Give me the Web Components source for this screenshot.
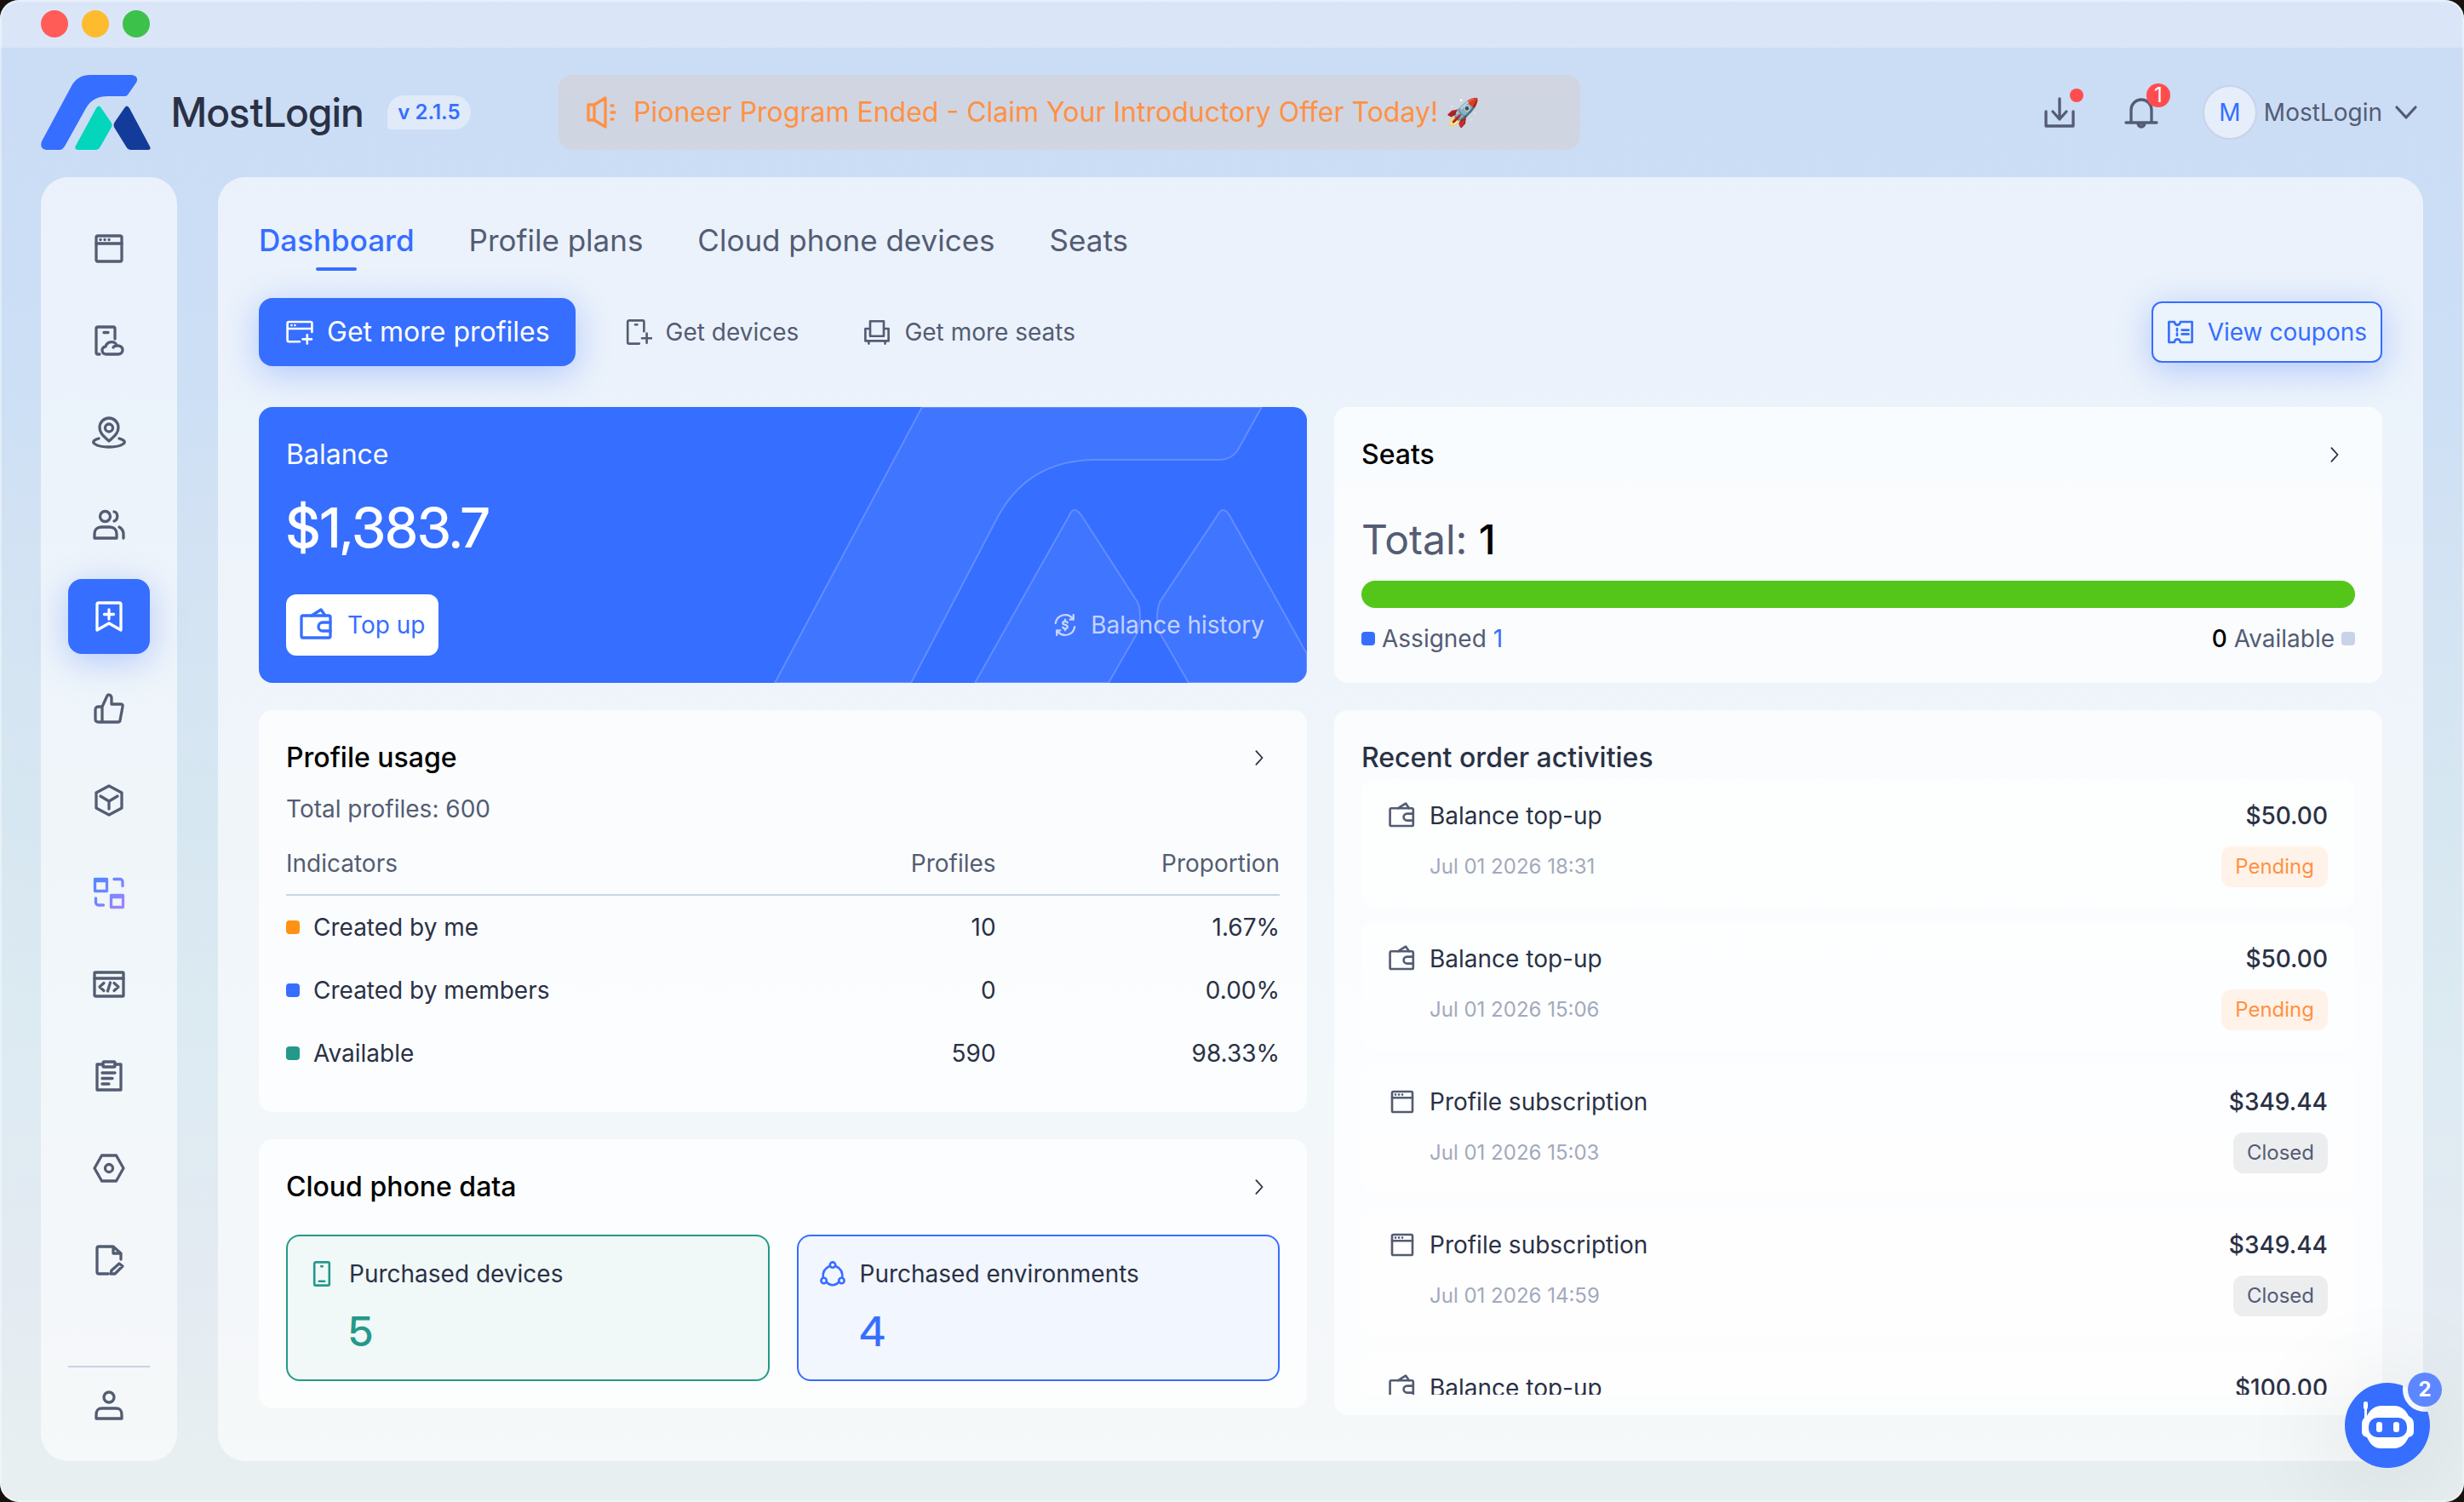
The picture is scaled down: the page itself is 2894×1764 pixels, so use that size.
<!DOCTYPE html>
<html lang="en">
<head>
<meta charset="utf-8">
<title>MostLogin</title>
<style>
    html {
        background: #17120e;
    }
    body {
        margin: 0;
        font-family: Inter, "Liberation Sans", sans-serif;
        font-size: 28px;
        line-height: 40px;
        color: #2a3145;
        --blue: #366eff;
        --slate: #545c73;
        --ink: #2a3145;
        --orange: #ff9142;
        --green: #24998a;
        --display: "Inter Display", Inter, "Liberation Sans", sans-serif;
    }
</style>
</head>
<body>
<ml-app></ml-app>

<script>
// Icons, all drawn on a 40 x 40 grid and coloured by currentColor.
const icons = {
    window: '<rect x="5" y="5" width="30" height="30" rx="2"/><path d="M5 14h30M10 9.500h.1M15 9.500h.1M20 9.500h.1"/>',
    phoneCloud: '<path d="M9 36H7a2 2 0 0 1-2-2V6a2 2 0 0 1 2-2h18a2 2 0 0 1 2 2v12M14 10.500h5"/><path d="M17 36c-6 0-7-8-1-9 2-7 12-7 13-1 9-1 9 10 2 10zM25 28c1-2 3-2 5-2"/>',
    location: '<path d="M20 30C13 24 9 20 9 14a11 11 0 0 1 22 0c0 6-4 10-11 16z"/><circle cx="20" cy="14.500" r="4.500"/><path d="M8 27c-14 4-2 10 12 10s26-6 12-10"/>',
    users: '<circle cx="15.500" cy="10.500" r="6"/><path d="M3 36v-5c0-5 3-8 8-8h10c5 0 8 3 8 8v5zM26 5c5 1 5 9 0 11M32 23c4 2 5 5 5 9v4"/>',
    bookmark: '<path d="M6 36V6a2 2 0 0 1 2-2h24a2 2 0 0 1 2 2v30l-14-8zM20 12v11M14.500 17.500h11"/>',
    thumb: '<path d="M12 18v18M12 18l6-13c1-2 5-1 5 3v7h11c2 0 2.500 1 2 3l-3 16c0 1-1 2-3 2H8c-3 0-4-1-4-4V22c0-3 1-4 4-4z"/>',
    cube: '<path d="M20 3l15 8v18l-15 8-15-8V11zM10 15l10 6 10-6M20 21v9"/>',
    code: '<rect x="3" y="6" width="34" height="28" rx="1"/><path d="M3 13h34M14 18.500L9 23l5 4.500M26 18.500l5 4.500-5 4.500M21.500 18l-3 10"/>',
    clipboard: '<path d="M13 6H6v30h28V6h-7"/><rect x="13" y="3" width="14" height="6" rx="1"/><path d="M12 16h15M12 22.500h12M12 29h8"/>',
    hexagon: '<path d="M3 20L11.500 5h17L37 20l-8.500 15h-17z"/><circle cx="20" cy="20" r="4.500"/>',
    docEdit: '<path d="M19 36H8a2 2 0 0 1-2-2V6a2 2 0 0 1 2-2h17l9 8v7M25 4v8h9M22 36l1-4 9-8 4 3-9 9z"/>',
    user: '<circle cx="20" cy="11" r="6"/><path d="M5 36v-4c0-6 2-8 7-8h16c5 0 7 2 7 8v4z"/>',
    download: '<path d="M20 4v24M12 19l8 9 8-9M4 19v17h32V19"/>',
    bell: '<path d="M8 31V17a12 12 0 0 1 24 0v14M2 32h36M16 33a4 4 0 0 0 8 0z"/>',
    horn: '<path d="M3 11h7v18H3zM10 11l13-8v34l-13-8M30 12h2M30 20h4M30 28h2"/>',
    down: '<path d="M9 14l11 12 11-12"/>',
    right: '<path d="M14 7l12 13-12 13"/>',
    profilePlus: '<path d="M20 34H4a2 2 0 0 1-2-2V7a2 2 0 0 1 2-2h32a2 2 0 0 1 2 2v13M2 15h36M8 10h.1M13 10h.1M31 24v13M24.500 30.500h13"/>',
    devicePlus: '<path d="M21 37H6a2 2 0 0 1-2-2V5a2 2 0 0 1 2-2h20a2 2 0 0 1 2 2v14M15 9h3M32 22v14M25 29h14"/>',
    seat: '<path d="M10 26V4h20v22zM10 15H3v18h34V15h-7M8 33v4M32 33v4"/>',
    coupon: '<path d="M3 5h8c1 6 8 6 9 0h17v30H20c-1-6-8-6-9 0H3zM15 15v3M15 22v3M22 17h10M22 23h10"/>',
    wallet: '<rect x="2" y="9" width="34" height="26" rx="2"/><path d="M14 9l11-7 5 7M36 17h-9a5 5 0 0 0 0 10h9"/>',
    history: '<path d="M4 17A16 16 0 0 1 33 10M36 23A16 16 0 0 1 7 30M34 3v8h-6M6 37v-8h6M24 16c-2-3-8-2-8 1s8 2 8 6-6 4-8 1M20 11v3M20 26v3"/>',
    phone: '<rect x="9" y="3" width="22" height="34" rx="2"/><path d="M19 9h2M16 31h8"/>',
    env: '<circle cx="20" cy="7" r="4"/><circle cx="7" cy="30" r="4"/><circle cx="33" cy="30" r="4"/><path d="M15 9C8 12 5 18 6 26M25 9c7 3 10 9 9 17M11 32c5 6 13 6 18 0"/>',
    swap: '<defs><linearGradient id="g" x1="0" y1="0" x2="40" y2="40" gradientUnits="userSpaceOnUse"><stop offset="0" stop-color="#4a86ff"/><stop offset="1" stop-color="#a483ff"/></linearGradient></defs><g stroke="url(#g)"><path d="M3.500 4.500h14v14h-14zM22.500 23.500h14v14h-14zM26 4.500h7a3 3 0 0 1 3 3v5M4.500 27v5a3 3 0 0 0 3 3h6"/><path d="M4 6.500h13M23 25.500h13"/></g>',
};

// Registers an element whose shadow root is a clone of the given markup.
function define (name, html, connected) {
    const template = document.createElement('template');
    template.innerHTML = html;
    window.customElements.define(name, class extends HTMLElement {
        constructor () {
            super();
            this.attachShadow({ mode: 'open' });
            this.shadowRoot.appendChild(template.content.cloneNode(true));
        }
        connectedCallback () {
            if (connected) {
                connected(this, this.shadowRoot);
            }
        }
    });
}

define('ml-icon', `
<style>
    :host { display: block; width: var(--size, 40px); height: var(--size, 40px); flex: none; }
    svg {
        display: block;
        width: 100%;
        height: 100%;
        fill: none;
        stroke: currentColor;
        stroke-width: var(--stroke, 3.3);
        stroke-linecap: round;
        stroke-linejoin: round;
    }
</style>
<svg viewBox="0 0 40 40" aria-hidden="true"></svg>
`, (host, root) => {
    root.querySelector('svg').innerHTML = icons[host.getAttribute('name')];
});

define('ml-titlebar', `
<style>
    :host {
        display: flex;
        gap: 16px;
        align-items: center;
        height: 56px;
        padding: 0 48px;
        background: rgba(255, 255, 255, .3);
    }
    i { width: 32px; height: 32px; border-radius: 50%; background: #ff5c57; }
    i:nth-of-type(2) { background: #febb2e; }
    i:nth-of-type(3) { background: #3cc24a; }
</style>
<i></i><i></i><i></i>
`);

define('ml-header', `
<style>
    :host { display: flex; align-items: center; padding: 32px 48px; color: var(--slate); }
    .brand { display: flex; flex: 0 0 608px; align-items: center; gap: 24px; }
    .brand svg { display: block; width: 129px; height: 88px; }
    h1 {
        margin: 0 4px 0 0;
        font-family: var(--display);
        font-size: 48px;
        line-height: 56px;
        font-weight: 500;
        color: var(--ink);
    }
    .version {
        padding: 0 12px;
        border-radius: 20px 20px 20px 4px;
        background: rgba(255, 255, 255, .4);
        color: var(--blue);
        font-size: 24px;
        font-weight: 600;
    }
    .banner {
        display: flex;
        flex: 0 1 1200px;
        box-sizing: border-box;
        align-items: center;
        gap: 16px;
        height: 88px;
        padding: 0 32px;
        border-radius: 16px;
        background: rgba(255, 146, 60, .1);
        color: var(--orange);
        font-size: 32px;
        text-decoration: none;
        white-space: nowrap;
    }
    .tools { display: flex; flex: none; align-items: center; margin-left: auto; gap: 52px; }
    .alerts { display: flex; gap: 56px; }
    button {
        position: relative;
        display: flex;
        align-items: center;
        gap: 8px;
        padding: 0;
        border: 0;
        background: none;
        color: inherit;
        font: inherit;
    }
    .dot, .count { position: absolute; border-radius: 50%; background: #ff4d4f; }
    .dot { top: -8px; right: -8px; width: 16px; height: 16px; }
    .count { top: -14px; right: -14px; width: 28px; height: 28px; color: #fff; font-size: 24px; line-height: 28px; }
    .avatar {
        box-sizing: border-box;
        width: 64px;
        height: 64px;
        border: 2px solid #c9d3e8;
        border-radius: 50%;
        background: rgba(255, 255, 255, .5);
        color: var(--blue);
        line-height: 60px;
    }
</style>
<div class="brand">
    <svg viewBox="0 0 129 88" aria-hidden="true">
        <path fill="#366eff" d="M8 88C1 88-1 84 1 78L36 13C41 4 48 0 58 0h47c7 0 10 4 7 9l-9 13c-2 3-3 3-6 3H79c-12 0-20 4-26 14L29 82c-3 5-4 6-9 6z"/>
        <path fill="#03d6bb" d="M65 39q3-5 6 0l11 16q3 4 0 8L70 84q-2 4-6 4H45q-7 0-4-5z"/>
        <path fill="#133c9a" d="M98 39q3-5 6 0l24 45q2 4-2 4h-20q-4 0-6-4L87 63q-3-4 0-8z"/>
    </svg>
    <h1>MostLogin</h1>
    <span class="version">v 2.1.5</span>
</div>
<a class="banner" href="#offer"><ml-icon name="horn"></ml-icon><span>Pioneer Program Ended - Claim Your Introductory Offer Today! 🚀</span></a>
<div class="tools">
    <div class="alerts">
        <button aria-label="Downloads"><ml-icon name="download"></ml-icon><span class="dot"></span></button>
        <button aria-label="Notifications"><ml-icon name="bell"></ml-icon><span class="count">1</span></button>
    </div>
    <button><span class="avatar">M</span><span>MostLogin</span><ml-icon name="down"></ml-icon></button>
</div>
`);

define('ml-sidebar', `
<style>
    :host {
        display: flex;
        flex: none;
        flex-direction: column;
        box-sizing: border-box;
        width: 160px;
        padding: 40px 32px 22px;
        border-radius: 32px;
        background: rgba(255, 255, 255, .6);
    }
    nav { display: flex; flex-direction: column; gap: 20px; }
    a {
        display: flex;
        align-items: center;
        justify-content: center;
        height: 88px;
        border-radius: 16px;
        color: var(--slate);
    }
    a[aria-current] { background: var(--blue); color: #fff; box-shadow: 0 8px 40px rgba(54, 110, 255, .32); }
    .account { margin-top: auto; border-top: 2px solid #c9d3e8; border-radius: 0; }
</style>
<nav></nav>
<a class="account" href="#account" aria-label="Account"><ml-icon name="user"></ml-icon></a>
`, (host, root) => {
    const names = ['window', 'phoneCloud', 'location', 'users', 'bookmark', 'thumb',
        'cube', 'swap', 'code', 'clipboard', 'hexagon', 'docEdit'];
    root.querySelector('nav').innerHTML = names.map((name) => {
        const current = name === 'bookmark' ? ' aria-current="page"' : '';
        return `<a href="#${name}" aria-label="${name}"${current}><ml-icon name="${name}"></ml-icon></a>`;
    }).join('');
});

define('ml-tabs', `
<style>
    :host { display: flex; gap: 64px; }
    button {
        display: flex;
        flex-direction: column;
        align-items: center;
        gap: 10px;
        padding: 0;
        border: 0;
        background: none;
        color: var(--slate);
        font: inherit;
        font-size: 35px;
        line-height: 44px;
    }
    button::after { content: ""; width: 48px; height: 4px; border-radius: 2px; }
    button[aria-selected="true"] { color: var(--blue); font-weight: 500; }
    button[aria-selected="true"]::after { background: var(--blue); }
</style>
<button role="tab" aria-selected="true">Dashboard</button>
<button role="tab">Profile plans</button>
<button role="tab">Cloud phone devices</button>
<button role="tab">Seats</button>
`);

define('ml-button', `
<style>
    :host { display: block; --size: 32px; }
    button {
        display: flex;
        box-sizing: border-box;
        align-items: center;
        gap: 16px;
        height: 72px;
        padding: 0 16px;
        border: 2px solid transparent;
        border-radius: 12px;
        background: none;
        color: var(--slate);
        font: inherit;
        white-space: nowrap;
    }
    :host([kind="primary"]) button {
        height: 80px;
        padding: 0 28px 0 30px;
        border-radius: 16px;
        background: var(--blue);
        color: #fff;
        font-size: 32px;
        box-shadow: 0 8px 40px rgba(54, 110, 255, .32);
    }
    :host([kind="outline"]) button {
        border-color: var(--blue);
        background: #ebf3fc;
        color: var(--blue);
        box-shadow: 0 8px 40px rgba(54, 110, 255, .32);
    }
    :host([kind="white"]) { --size: 40px; }
    :host([kind="white"]) button { padding: 0 14px; background: #fff; color: var(--blue); }
    :host([kind="ghost"]) { --size: 28px; }
    :host([kind="ghost"]) button { color: rgba(255, 255, 255, .7); }
</style>
<button><ml-icon></ml-icon><slot></slot></button>
`, (host, root) => {
    const icon = document.createElement('ml-icon');
    icon.setAttribute('name', host.getAttribute('icon'));
    root.querySelector('ml-icon').replaceWith(icon);
});

define('ml-card', `
<style>
    :host {
        display: flex;
        flex-direction: column;
        box-sizing: border-box;
        min-height: 0;
        padding: 32px;
        border-radius: 16px;
        background: rgba(255, 255, 255, .7);
    }
    header { display: flex; flex: none; align-items: center; justify-content: space-between; }
    h2 { margin: 0; font-size: 32px; line-height: 48px; font-weight: 500; color: var(--title, #000); }
    button { padding: 12px; border: 0; background: none; color: var(--ink); --size: 24px; --stroke: 3; }
    :host([plain]) button { display: none; }
</style>
<header><h2></h2><button><ml-icon name="right"></ml-icon></button></header>
<slot></slot>
`, (host, root) => {
    root.querySelector('h2').textContent = host.getAttribute('heading');
    root.querySelector('button').setAttribute('aria-label', `Open ${host.getAttribute('heading')}`);
});

define('ml-balance', `
<style>
    :host {
        position: relative;
        display: flex;
        flex-direction: column;
        box-sizing: border-box;
        height: 324px;
        padding: 32px;
        overflow: hidden;
        border-radius: 16px;
        background: var(--blue);
        color: #fff;
    }
    .art { position: absolute; top: 0; right: 0; width: 640px; height: 324px; }
    .art path { fill: rgba(255, 255, 255, .05); stroke: rgba(255, 255, 255, .2); stroke-width: 2; }
    h2 { margin: 0 0 20px; font-size: 32px; line-height: 48px; font-weight: 400; }
    strong { font-family: var(--display); font-size: 64px; line-height: 84px; font-weight: 500; }
    footer { position: relative; display: flex; justify-content: space-between; margin-top: auto; }
</style>
<svg class="art" viewBox="0 0 640 324" aria-hidden="true">
    <path d="M188 0L15 324h160L277 129q36-67 115-67h146q12 0 20-10L587 0z"/>
    <path d="M250 324L361 127q5-12 14 0l66 102q6 13 0 36l-34 59z"/>
    <path d="M501 324l-34-59q-6-20 0-36l68-102q6-12 14 0l91 163v34z"/>
</svg>
<h2>Balance</h2>
<strong>$1,383.7</strong>
<footer>
    <ml-button kind="white" icon="wallet">Top up</ml-button>
    <ml-button kind="ghost" icon="history">Balance history</ml-button>
</footer>
`);

define('ml-seats', `
<style>
    :host { display: block; }
    ml-card { height: 324px; }
    .total { margin: auto 0 20px; font-size: 48px; line-height: 56px; color: var(--slate); }
    b { font-weight: 500; color: #000; }
    .bar { flex: none; height: 32px; border-radius: 16px; background: #54c61a; }
    .legend { display: flex; justify-content: space-between; margin-top: 16px; color: var(--slate); }
    .legend span { display: flex; align-items: center; gap: 8px; }
    i { width: 16px; height: 16px; border-radius: 4px; background: #c9d3e8; }
    .assigned i { background: var(--blue); }
    .assigned b { color: var(--blue); font-weight: 400; }
</style>
<ml-card heading="Seats">
    <div class="total">Total: <b>1</b></div>
    <div class="bar" role="img" aria-label="Seats assigned"></div>
    <div class="legend">
        <span class="assigned"><i></i><span>Assigned</span><b>1</b></span>
        <span><b>0</b><span>Available</span><i></i></span>
    </div>
</ml-card>
`);

define('ml-usage', `
<style>
    :host { display: block; }
    p { margin: 16px 0; color: var(--slate); }
    table { width: 100%; border-collapse: collapse; table-layout: fixed; }
    th, td { padding: 17px 0; text-align: right; font-weight: 400; }
    thead th { padding: 8px 0 16px; border-bottom: 2px solid #cbd5e8; color: var(--slate); }
    th:first-child { text-align: left; }
    th:last-child { width: calc(200% / 7); }
    i {
        display: inline-block;
        width: 16px;
        height: 16px;
        margin-right: 16px;
        border-radius: 4px;
        background: #ff9114;
        vertical-align: 2px;
    }
    tr:nth-child(2) i { background: var(--blue); }
    tr:nth-child(3) i { background: var(--green); }
</style>
<ml-card heading="Profile usage">
    <p>Total profiles: 600</p>
    <table>
        <thead><tr><th>Indicators</th><th>Profiles</th><th>Proportion</th></tr></thead>
        <tbody>
            <tr><th><i></i>Created by me</th><td>10</td><td>1.67%</td></tr>
            <tr><th><i></i>Created by members</th><td>0</td><td>0.00%</td></tr>
            <tr><th><i></i>Available</th><td>590</td><td>98.33%</td></tr>
        </tbody>
    </table>
</ml-card>
`);

define('ml-stat', `
<style>
    :host {
        display: grid;
        grid-template-columns: 32px 1fr;
        align-items: center;
        gap: 16px;
        padding: 24px;
        border: 2px solid currentColor;
        border-radius: 16px;
        --size: 32px;
    }
    .label { color: var(--ink); }
    .value { grid-column: 2; font-family: var(--display); font-size: 48px; line-height: 64px; font-weight: 500; }
</style>
<slot name="icon"></slot>
<span class="label"><slot></slot></span>
<span class="value"></span>
`, (host, root) => {
    root.querySelector('.value').textContent = host.getAttribute('value');
});

define('ml-cloud', `
<style>
    :host { display: block; }
    .stats { display: grid; grid-template-columns: 1fr 1fr; gap: 32px; margin-top: 32px; }
    .devices { color: var(--green); background: rgba(36, 153, 138, .05); }
    .envs { color: var(--blue); background: rgba(54, 110, 255, .05); }
</style>
<ml-card heading="Cloud phone data">
    <div class="stats">
        <ml-stat class="devices" value="5"><ml-icon slot="icon" name="phone"></ml-icon>Purchased devices</ml-stat>
        <ml-stat class="envs" value="4"><ml-icon slot="icon" name="env"></ml-icon>Purchased environments</ml-stat>
    </div>
</ml-card>
`);

define('ml-order', `
<style>
    :host {
        display: grid;
        grid-template-columns: 32px 1fr auto;
        grid-template-rows: 40px 48px;
        flex: none;
        align-items: center;
        gap: 16px;
        padding: 24px 32px;
        border-radius: 16px;
        background: rgba(255, 255, 255, .6);
        --size: 32px;
    }
    ml-icon { color: var(--slate); }
    .amount { font-weight: 500; text-align: right; }
    time { grid-column: 2; font-size: 24px; color: #a3a9bd; }
    .status {
        justify-self: end;
        padding: 4px 16px;
        border-radius: 12px;
        background: #ecedef;
        color: var(--slate);
        font-size: 24px;
    }
    :host([status="Pending"]) .status { background: #fff2e9; color: var(--orange); }
</style>
<ml-icon></ml-icon>
<span><slot></slot></span>
<span class="amount"></span>
<time></time>
<span class="status"></span>
`, (host, root) => {
    const icon = document.createElement('ml-icon');
    icon.setAttribute('name', host.getAttribute('icon'));
    root.querySelector('ml-icon').replaceWith(icon);
    root.querySelector('.amount').textContent = host.getAttribute('amount');
    root.querySelector('time').textContent = host.getAttribute('time');
    root.querySelector('.status').textContent = host.getAttribute('status');
});

define('ml-orders', `
<style>
    :host { display: flex; flex: 1; min-height: 0; }
    ml-card { flex: 1; padding-bottom: 24px; --title: var(--ink); }
    .list { display: flex; flex: 1 1 0; flex-direction: column; gap: 16px; min-height: 0; overflow: hidden; }
</style>
<ml-card plain heading="Recent order activities">
    <div class="list">
        <ml-order icon="wallet" amount="$50.00" time="Jul 01 2026 18:31" status="Pending">Balance top-up</ml-order>
        <ml-order icon="wallet" amount="$50.00" time="Jul 01 2026 15:06" status="Pending">Balance top-up</ml-order>
        <ml-order icon="window" amount="$349.44" time="Jul 01 2026 15:03" status="Closed">Profile subscription</ml-order>
        <ml-order icon="window" amount="$349.44" time="Jul 01 2026 14:59" status="Closed">Profile subscription</ml-order>
        <ml-order icon="wallet" amount="$100.00">Balance top-up</ml-order>
    </div>
</ml-card>
`);

define('ml-assistant', `
<style>
    :host { position: absolute; right: 40px; bottom: 40px; }
    button {
        display: block;
        width: 100px;
        height: 100px;
        padding: 0;
        border: 0;
        border-radius: 50%;
        background: none;
        box-shadow: 0 12px 120px 20px rgba(0, 0, 0, .08);
    }
    svg { display: block; }
    span {
        position: absolute;
        top: -12px;
        right: -14px;
        width: 40px;
        height: 40px;
        border-radius: 50%;
        background: #5d87ff;
        color: #fff;
        font-size: 24px;
        font-weight: 700;
        text-align: center;
    }
</style>
<button aria-label="Assistant">
    <svg width="100" height="100" viewBox="0 0 100 100" aria-hidden="true">
        <mask id="cut"><rect width="100" height="100" fill="#fff"/><circle cx="94" cy="8" r="26" fill="#000"/></mask>
        <circle cx="50" cy="50" r="50" fill="#366eff" mask="url(#cut)"/>
        <g fill="#fff">
            <rect x="22" y="22" width="5" height="9" rx="2"/>
            <rect x="23" y="29" width="3" height="16"/>
            <path d="M43 27h15c9 0 14 6 17 12 4 2 6 5 6 9v9c0 4-2 6-6 7-4 8-9 13-17 13H43c-9 0-13-5-17-13-4-1-6-3-6-7v-9c0-4 2-7 6-9 3-6 8-12 17-12z"/>
        </g>
        <rect x="28" y="41" width="45" height="23" rx="10" fill="#366eff"/>
        <rect x="37" y="46" width="7" height="12" rx="3" fill="#fff"/>
        <rect x="57" y="46" width="7" height="12" rx="3" fill="#fff"/>
    </svg>
</button>
<span>2</span>
`);

define('ml-app', `
<style>
    :host {
        position: relative;
        display: flex;
        flex-direction: column;
        height: 100vh;
        overflow: hidden;
        border-radius: 22px;
        background: linear-gradient(#cbdcf5, #ccdff5 25%, #d4e3f3 38%, #d7e7f1 55%, #deebf2 72%, #e3eaf2 84%, #e7eff1 97%);
        box-shadow: inset 0 0 0 2px rgba(255, 255, 255, .4);
    }
    .body { display: flex; flex: 1; gap: 48px; min-height: 0; padding: 0 48px 48px; }
    main {
        display: flex;
        flex: 1;
        flex-direction: column;
        min-width: 0;
        padding: 52px 48px 54px;
        border-radius: 32px;
        background: rgba(255, 255, 255, .6);
    }
    .actions { display: flex; align-items: center; gap: 40px; margin: 32px 0 48px; }
    .actions :last-child { margin-left: auto; }
    .grid { display: grid; flex: 1; grid-template-columns: 1fr 1fr; gap: 32px; min-height: 0; }
    .column { display: flex; flex-direction: column; gap: 32px; min-width: 0; min-height: 0; }
</style>
<ml-titlebar></ml-titlebar>
<ml-header></ml-header>
<div class="body">
    <ml-sidebar></ml-sidebar>
    <main>
        <ml-tabs role="tablist"></ml-tabs>
        <div class="actions">
            <ml-button kind="primary" icon="profilePlus">Get more profiles</ml-button>
            <ml-button icon="devicePlus">Get devices</ml-button>
            <ml-button icon="seat">Get more seats</ml-button>
            <ml-button kind="outline" icon="coupon">View coupons</ml-button>
        </div>
        <div class="grid">
            <div class="column">
                <ml-balance></ml-balance>
                <ml-usage></ml-usage>
                <ml-cloud></ml-cloud>
            </div>
            <div class="column">
                <ml-seats></ml-seats>
                <ml-orders></ml-orders>
            </div>
        </div>
    </main>
</div>
<ml-assistant></ml-assistant>
`);
</script>
</body>
</html>
